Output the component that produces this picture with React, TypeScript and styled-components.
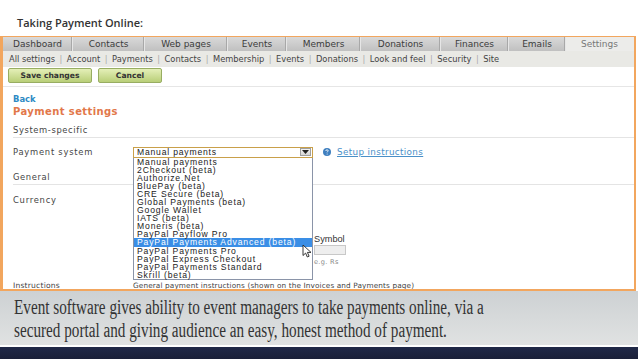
import { FC } from 'react';
import styled, { createGlobalStyle } from 'styled-components';

const GlobalStyle = createGlobalStyle`
  html, body {
    margin: 0;
    padding: 0;
    background: #fff;
  }
  body {
    width: 638px;
    height: 359px;
    overflow: hidden;
  }
`;

const tabs = [
  { name: 'Dashboard', width: 70 },
  { name: 'Contacts', width: 72 },
  { name: 'Web pages', width: 83 },
  { name: 'Events', width: 59 },
  { name: 'Members', width: 74 },
  { name: 'Donations', width: 80 },
  { name: 'Finances', width: 68 },
  { name: 'Emails', width: 57 },
  { name: 'Settings', width: 0, active: true },
];

const settingsLinks = [
  'All settings',
  'Account',
  'Payments',
  'Contacts',
  'Membership',
  'Events',
  'Donations',
  'Look and feel',
  'Security',
  'Site',
];

const paymentSystems = [
  'Manual payments',
  '2Checkout (beta)',
  'Authorize.Net',
  'BluePay (beta)',
  'CRE Secure (beta)',
  'Global Payments (beta)',
  'Google Wallet',
  'IATS (beta)',
  'Moneris (beta)',
  'PayPal Payflow Pro',
  'PayPal Payments Advanced (beta)',
  'PayPal Payments Pro',
  'PayPal Express Checkout',
  'PayPal Payments Standard',
  'Skrill (beta)',
];

const SELECTED = 10;

const App: FC = () => {
  return (
    <Slide>
      <GlobalStyle />
      <SlideTitle>Taking Payment Online:</SlideTitle>

      <Frame>
        <TabBar>
          {tabs.map(tab => (
            <Tab key={tab.name} $width={tab.width} $active={tab.active}>
              {tab.name}
            </Tab>
          ))}
        </TabBar>

        <SubNav>
          {settingsLinks.map((link, i) => (
            <span key={link}>
              {i > 0 && <NavSeparator>|</NavSeparator>}
              {link}
            </span>
          ))}
        </SubNav>

        <ButtonRow>
          <GreenButton $width={84}>Save changes</GreenButton>
          <GreenButton $width={64}>Cancel</GreenButton>
        </ButtonRow>

        <Content>
          <BackLink>Back</BackLink>
          <PageTitle>Payment settings</PageTitle>

          <SectionHeading $top={4}>System-specific</SectionHeading>

          <FormRow $top={6} $height={16}>
            <Label>Payment system</Label>
            <SelectWrap>
              <SelectBox>
                Manual payments
                <SelectArrow>
                  <svg width="7" height="4" viewBox="0 0 7 4">
                    <path d="M0 0h7L3.5 4z" fill="#222" />
                  </svg>
                </SelectArrow>
              </SelectBox>

              <OptionList>
                {paymentSystems.map((item, i) => (
                  <Option key={item} $selected={i === SELECTED}>
                    {item}
                  </Option>
                ))}
              </OptionList>

              <Cursor width="10" height="14" viewBox="0 0 10 14">
                <path
                  d="M1 1v10.5l2.6-2.4 1.7 3.9 1.8-.8-1.7-3.8H9z"
                  fill="#fff"
                  stroke="#222"
                  strokeWidth="0.9"
                  strokeLinejoin="round"
                />
              </Cursor>
            </SelectWrap>

            <HelpLink>
              <svg width="8" height="8" viewBox="0 0 8 8">
                <circle cx="4" cy="4" r="4" fill="#3f7fbf" />
                <path
                  d="M2.8 3c0-.8.5-1.2 1.2-1.2s1.2.4 1.2 1c0 .8-1.1.8-1.1 1.6"
                  fill="none"
                  stroke="#fff"
                  strokeWidth="0.9"
                />
                <circle cx="4.1" cy="5.9" r="0.5" fill="#fff" />
              </svg>
              <span>Setup instructions</span>
            </HelpLink>
          </FormRow>

          <SectionHeading $top={10}>General</SectionHeading>

          <FormRow $top={8} $height={88} $align="flex-start">
            <Label>Currency</Label>
            <CurrencyFields>
              <HiddenField />
              <SymbolGroup>
                <SmallLabel>Symbol</SmallLabel>
                <SymbolInput />
                <Hint>e.g. Rs</Hint>
              </SymbolGroup>
            </CurrencyFields>
          </FormRow>

          <FormRow $top={0} $height={9}>
            <Label $small>Instructions</Label>
            <Note>General payment instructions (shown on the Invoices and Payments page)</Note>
          </FormRow>
        </Content>
      </Frame>

      <Caption>
        <CaptionText>
          Event software gives ability to event managers to take payments online, via a
          <br />
          secured portal and giving audience an easy, honest method of payment.
        </CaptionText>
      </Caption>
      <BottomBar />
    </Slide>
  );
};

export default App;

const Slide = styled.div`
  width: 638px;
  height: 359px;
  display: flex;
  flex-direction: column;
  background: #fff;
  overflow: hidden;
`;

const SlideTitle = styled.div`
  height: 36px;
  box-sizing: border-box;
  padding: 15px 0 0 17px;
  font-family: 'Open Sans', sans-serif;
  font-weight: 600;
  font-size: 11px;
  line-height: 15px;
  color: #333;
`;

const Frame = styled.div`
  height: 255px;
  box-sizing: border-box;
  margin-right: 2px;
  border: solid #f2a65e;
  border-width: 1px 2px 2px 3px;
  display: flex;
  flex-direction: column;
  font-family: 'DejaVu Sans', Verdana, sans-serif;
  color: #444;
  overflow: hidden;
`;

const TabBar = styled.div`
  display: flex;
  height: 14px;
  flex-shrink: 0;
`;

const Tab = styled.div<{ $width: number; $active?: boolean }>`
  ${p => (p.$width ? `width: ${p.$width}px;` : 'flex: 1;')}
  box-sizing: border-box;
  display: flex;
  align-items: center;
  justify-content: center;
  font-size: 9px;
  color: ${p => (p.$active ? '#777' : '#3c3c3c')};
  background: ${p =>
    p.$active ? '#ececea' : 'linear-gradient(#d9d9d9, #c0c0c0)'};
  border-right: 1px solid ${p => (p.$active ? 'transparent' : '#e6e6e6')};
  box-shadow: ${p => (p.$active ? 'none' : 'inset -1px 0 0 #a8a8a8')};
`;

const SubNav = styled.div`
  height: 16px;
  flex-shrink: 0;
  box-sizing: border-box;
  padding-left: 6px;
  display: flex;
  align-items: center;
  background: #e9e9e5;
  font-size: 8.3px;
  color: #444;
  white-space: nowrap;
`;

const NavSeparator = styled.span`
  color: #aaa;
  margin: 0 4.5px;
`;

const ButtonRow = styled.div`
  height: 20px;
  flex-shrink: 0;
  box-sizing: border-box;
  padding: 1px 0 0 5px;
  display: flex;
  align-items: flex-start;
  gap: 6px;
  border-bottom: 1px solid #e6e6e6;
`;

const GreenButton = styled.button<{ $width: number }>`
  width: ${p => p.$width}px;
  height: 15px;
  padding: 0;
  border: 1px solid #98ad62;
  border-radius: 2px;
  background: linear-gradient(#e4efb8, #b9cf78);
  font-family: 'DejaVu Sans', Verdana, sans-serif;
  font-weight: bold;
  font-size: 7.6px;
  color: #333;
`;

const Content = styled.div`
  position: relative;
  flex: 1;
  display: flex;
  flex-direction: column;
  padding-left: 10px;
`;

const BackLink = styled.div`
  margin-top: 6px;
  height: 12px;
  line-height: 12px;
  font-size: 8.4px;
  font-weight: bold;
  color: #2e8ac4;
`;

const PageTitle = styled.div`
  height: 14px;
  line-height: 14px;
  font-size: 10px;
  font-weight: bold;
  letter-spacing: 0.4px;
  color: #e2774a;
`;

const SectionHeading = styled.div<{ $top: number }>`
  margin-top: ${p => p.$top}px;
  height: 15px;
  line-height: 14px;
  box-sizing: border-box;
  font-size: 8.4px;
  letter-spacing: 0.6px;
  color: #444;
  border-bottom: 1px solid #e4e4e4;
`;

const FormRow = styled.div<{ $top: number; $height: number; $align?: string }>`
  margin-top: ${p => p.$top}px;
  height: ${p => p.$height}px;
  display: flex;
  align-items: ${p => p.$align || 'center'};
`;

const Label = styled.div<{ $small?: boolean }>`
  width: 120px;
  flex-shrink: 0;
  font-size: ${p => (p.$small ? '7.6px' : '8.4px')};
  letter-spacing: ${p => (p.$small ? '0.2px' : '0.75px')};
  line-height: ${p => (p.$small ? '9px' : '14px')};
  color: #444;
`;

const SelectWrap = styled.div`
  position: relative;
  width: 180px;
`;

const SelectBox = styled.div`
  height: 11px;
  box-sizing: border-box;
  border: 1px solid #c9a04a;
  background: #fff;
  padding-left: 3px;
  display: flex;
  align-items: center;
  justify-content: space-between;
  font-family: 'Liberation Sans', Arial, sans-serif;
  font-size: 8.6px;
  letter-spacing: 0.8px;
  color: #222;
`;

const SelectArrow = styled.span`
  width: 11px;
  height: 8px;
  margin-right: 1px;
  display: flex;
  align-items: center;
  justify-content: center;
  background: linear-gradient(#f4f4f4, #d6d6d6);
  border: 1px solid #a0a0a0;
  box-sizing: border-box;
`;

const OptionList = styled.div`
  position: absolute;
  top: 11px;
  left: 0;
  width: 180px;
  box-sizing: border-box;
  border: 1px solid #8a94a8;
  border-top: none;
  background: #fff;
  z-index: 2;
  font-family: 'Liberation Sans', Arial, sans-serif;
  font-size: 8.6px;
  letter-spacing: 0.85px;
  line-height: 8.1px;
`;

const Option = styled.div<{ $selected?: boolean }>`
  height: 8.1px;
  padding-left: 3px;
  white-space: nowrap;
  color: ${p => (p.$selected ? '#fff' : '#222')};
  background: ${p => (p.$selected ? '#3a8ee6' : 'transparent')};
`;

const Cursor = styled.svg`
  position: absolute;
  left: 169px;
  top: 97px;
  z-index: 3;
`;

const HelpLink = styled.div`
  margin-left: 10px;
  display: flex;
  align-items: center;
  gap: 6px;
  font-size: 8.8px;
  letter-spacing: 0.35px;
  color: #4a90c8;

  span {
    text-decoration: underline;
  }
`;

const CurrencyFields = styled.div`
  display: flex;
`;

const HiddenField = styled.div`
  width: 181px;
  height: 10px;
`;

const SymbolGroup = styled.div`
  margin-top: 41px;
  display: flex;
  flex-direction: column;
`;

const SmallLabel = styled.div`
  height: 11px;
  line-height: 11px;
  font-family: 'Liberation Sans', Arial, sans-serif;
  font-size: 9.2px;
  color: #333;
`;

const SymbolInput = styled.div`
  width: 32px;
  height: 10px;
  box-sizing: border-box;
  border: 1px solid #c8c8c8;
  background: #eeeeee;
`;

const Hint = styled.div`
  margin-top: 2px;
  font-size: 6.6px;
  line-height: 10px;
  color: #888;
  letter-spacing: 0.3px;
`;

const Note = styled.div`
  font-size: 7.3px;
  line-height: 9px;
  letter-spacing: 0.12px;
  color: #444;
  white-space: nowrap;
`;

const Caption = styled.div`
  height: 54px;
  flex-shrink: 0;
  box-sizing: border-box;
  padding: 5px 0 0 14px;
  background: linear-gradient(#cdd1d3, #e0e2e2);
  overflow: hidden;
`;

const CaptionText = styled.div`
  font-family: 'Liberation Serif', 'Times New Roman', serif;
  font-size: 20px;
  line-height: 23px;
  color: #333;
  white-space: nowrap;
  transform: scaleX(0.76);
  transform-origin: left top;
`;

const BottomBar = styled.div`
  margin-top: 2px;
  flex: 1;
  background: linear-gradient(#202948, #1a2038);
`;
